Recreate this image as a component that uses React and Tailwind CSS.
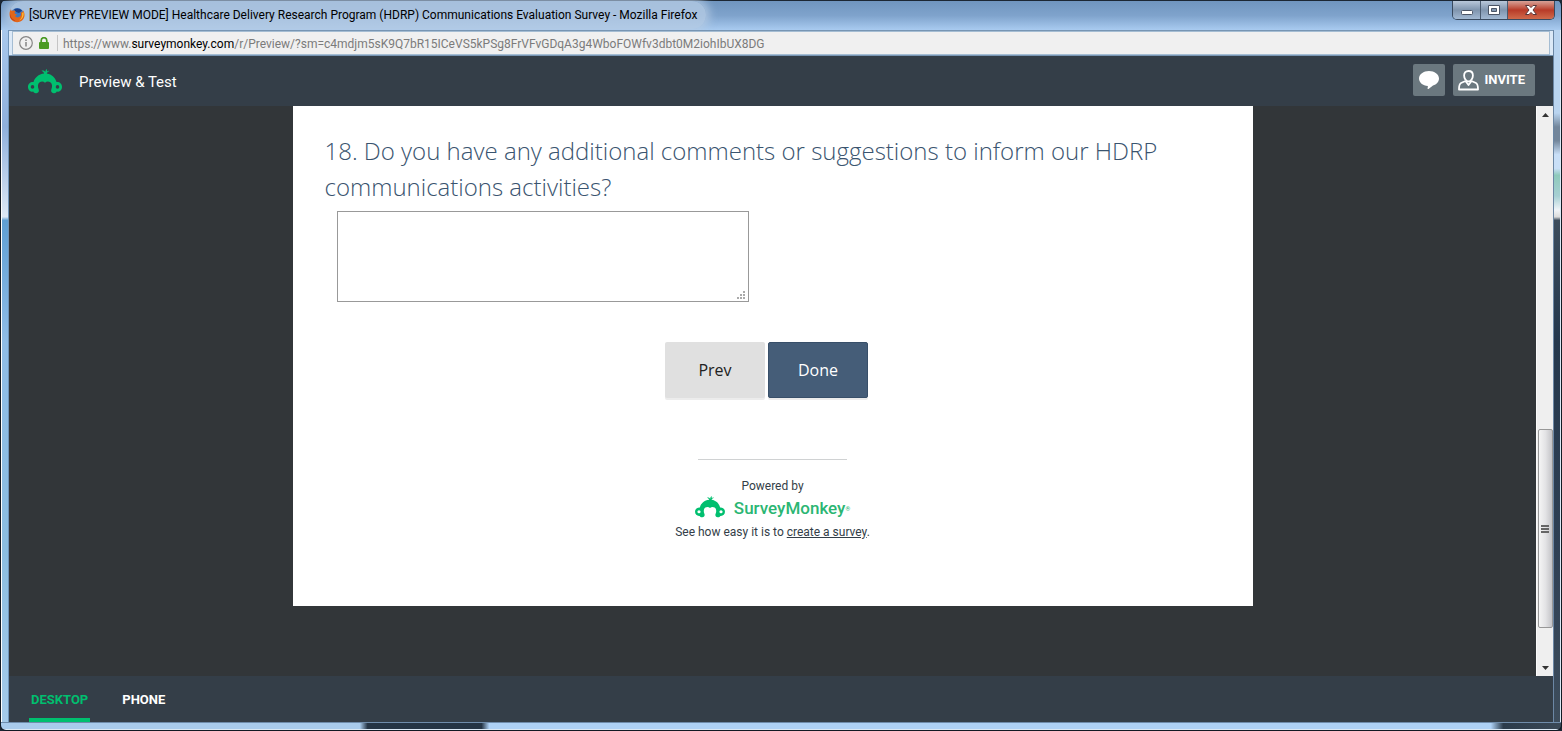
import React, { useState } from 'react';

const MonkeyMark = ({ className }) => (
  <svg viewBox="0 0 34 25" className={className} fill="none" aria-hidden="true">
    <path
      fill="#00bf6f"
      d="M16.2 4.4C15.6 3 14.600 2.200 13.500 1.700C15.200 1.400 16.500 1.900 17.300 3C17.400 1.700 17.900 .6 19 0C18.900 1 18.900 1.800 19.100 2.400C19.800 1.800 20.600 1.600 21.400 1.900C20.200 2.400 19.200 3.200 18.700 4.400C24 5.200 27.400 8.600 28.500 13.100C31.700 12.800 34 15 34 17.900C34 20.900 31.500 23 28.800 22.600C28.200 23.800 27 24.500 25.600 24.200C23.600 23.900 22.600 22.200 23.300 20.400C24.600 17.400 24.300 14.600 22.300 13.200C20.500 12 18.500 12.200 17 13.700C15.500 12.200 13.500 12 11.700 13.200C9.700 14.600 9.400 17.400 10.700 20.400C11.400 22.200 10.400 23.900 8.400 24.200C7 24.500 5.800 23.800 5.200 22.600C2.500 23 0 20.900 0 17.900C0 15 2.300 12.800 5.500 13.100C6.600 8.600 10.500 5 16.200 4.400Z"
    />
    <circle cx="4.500" cy="17.900" r="1.800" className="fill-current" />
    <circle cx="29.500" cy="17.900" r="1.800" className="fill-current" />
  </svg>
);

const FirefoxIcon = () => (
  <svg viewBox="0 0 16 16" className="size-4" aria-hidden="true">
    <circle cx="8.300" cy="7.600" r="6.500" fill="#3b78c3" />
    <path d="M5 2.500C7 .8 11 1 13 3.500L10 6L7 5Z" fill="#1c3f86" />
    <path
      d="M2 2C2 3 2.300 3.500 3 3.900C4.500 3.300 6 3.700 6.800 4.600C5.600 5 5.300 6 6 6.800L7.800 7.300C7.500 8.500 6.500 8.600 6 9C7 10.800 9.800 10.800 11.200 9.300C12.300 8 12.200 6.400 11.400 5C13.600 6 14.200 4.500 13.600 3C16 5.500 16.200 9.500 14 12.400C11.500 15.600 6.500 16 3.300 13.600C.4 11.300 0 7 1 4Z"
      fill="#e2661a"
    />
    <path d="M14.300 5C15.500 8.500 13.500 12.500 10 13.600C12.600 11.500 13.500 9 13.200 6Z" fill="#fbc034" />
    <path d="M1 6C1 9.500 3 12.500 6.500 13.600C4 14 1.500 11.500 1 9Z" fill="#b5311a" />
  </svg>
);

const TitleBar = () => (
  <div className="flex h-[30px] shrink-0 items-start justify-between border-t border-[#1c2734] bg-gradient-to-b from-[#7095bf] via-[#7fa3cc] to-[#a9cbf0] pr-1.5 pl-2">
    <div className="flex h-7 items-center gap-1 rounded-full bg-[#b4cbe4]/80 pr-2 shadow-[0_0_8px_4px_rgba(180,203,228,0.8)]">
      <FirefoxIcon />
      <h1 className="font-[Roboto,sans-serif] text-xs whitespace-nowrap text-black">
        [SURVEY PREVIEW MODE] Healthcare Delivery Research Program (HDRP) Communications Evaluation Survey - Mozilla Firefox
      </h1>
    </div>
    <div className="flex h-[19px] overflow-hidden rounded-b-[5px] border border-t-0 border-[#394a5f]">
      <button aria-label="Minimize" className="flex w-7 items-center justify-center border-r border-[#4a5b70] bg-gradient-to-b from-[#b9c8da] via-[#8095ae] via-50% to-[#a2b9d3]">
        <svg viewBox="0 0 12 5" className="mt-1 h-[5px] w-3">
          <rect x=".5" y=".5" width="11" height="4" rx="1" fill="#fff" stroke="#4b5566" />
        </svg>
      </button>
      <button aria-label="Maximize" className="flex w-[27px] items-center justify-center border-r border-[#4a5b70] bg-gradient-to-b from-[#b9c8da] via-[#8095ae] via-50% to-[#a2b9d3]">
        <svg viewBox="0 0 12 10" className="h-2.5 w-3">
          <path fillRule="evenodd" d="M.5.5h11v9H.5zM3.500 3.500h5v3h-5z" fill="#fff" stroke="#4b5566" />
        </svg>
      </button>
      <button aria-label="Close" className="flex w-[46px] items-center justify-center bg-gradient-to-b from-[#d6a097] via-[#b83a28] via-50% to-[#d06a4b]">
        <svg viewBox="0 0 12 10" className="h-2.5 w-3">
          <path d="M.5.5h3.500L6 2.600L8 .5h3.500L8 5l3.500 4.500H8L6 7.400L4 9.500H.5L4 5Z" fill="#fff" stroke="#5a3638" />
        </svg>
      </button>
    </div>
  </div>
);

const AddressBar = () => (
  <div className="shrink-0 border-t border-b border-[#7795b3] bg-[#dce9f7] px-[3px]">
    <div className="flex h-6 items-center border border-[#a5bdd3] bg-[#f0f0f0] pl-1.5">
      <svg viewBox="0 0 14 14" className="size-3.5" fill="none" stroke="#858585">
        <circle cx="7" cy="7" r="6.300" strokeWidth="1.200" />
        <path d="M7 6v4.500M7 3.500v1.500" strokeWidth="1.500" />
      </svg>
      <svg viewBox="0 0 10 12" className="ml-1.5 h-3 w-2.5">
        <rect y="5" width="10" height="7" rx="1" fill="#4b9a24" />
        <path d="M2.200 6V3.500a2.800 2.800 0 0 1 5.600 0V6" fill="none" stroke="#4b9a24" strokeWidth="1.700" />
      </svg>
      <span className="mr-[5px] ml-2 h-4 border-l border-[#c5c5c5]" />
      <p className="pt-0.5 font-[Roboto,sans-serif] text-xs whitespace-nowrap text-[#7b7b7b]">
        https://www.<span className="text-black">surveymonkey.com</span>
        /r/Preview/?sm=c4mdjm5sK9Q7bR15ICeVS5kPSg8FrVFvGDqA3g4WboFOWfv3dbt0M2iohIbUX8DG
      </p>
    </div>
  </div>
);

const PreviewHeader = () => (
  <header className="flex h-[50px] shrink-0 items-center bg-[#343e48] pr-[18px] pb-0.5 pl-[19px] font-[Roboto,sans-serif]">
    <MonkeyMark className="mt-0.5 h-[25px] w-[34px] text-[#343e48]" />
    <h2 className="mt-1 ml-[17px] text-[15px] text-white">Preview &amp; Test</h2>
    <div className="ml-auto flex gap-2">
      <button aria-label="Comments" className="flex size-8 items-center justify-center rounded-[2px] bg-[#6b787f]">
        <svg viewBox="0 0 20 18" className="h-[18px] w-5" fill="#fff">
          <path d="M10 0C15.500 0 20 3.200 20 7.500C20 10.800 17.600 13.500 14 14.500L9.500 18C8.800 18.400 8.500 18 8.600 17.400L8.900 15C3.800 14.700 0 11.500 0 7.500C0 3.200 4.500 0 10 0Z" />
        </svg>
      </button>
      <button className="flex h-8 items-center gap-1.5 rounded-[2px] bg-[#6b787f] pr-2.5 pl-[5px] text-[13px] font-bold text-white">
        <svg viewBox="0 0 21 21" className="size-[21px]" fill="none" stroke="#fff" strokeWidth="1.800" strokeLinejoin="round">
          <path d="M10.500 1C7.800 1 6.100 2.800 6.100 5.500C6.100 8.300 8 11.500 10.500 11.500S14.900 8.300 14.900 5.500C14.900 2.800 13.200 1 10.500 1Z" />
          <path d="M7.500 11L3 13C1.800 13.600 1 15.500 1 19.500H20C20 15.500 19.200 13.600 18 13L13.500 11M7.500 11L10.500 15L13.500 11" />
        </svg>
        INVITE
      </button>
    </div>
  </header>
);

const Scrollbar = () => (
  <div className="flex w-[17px] shrink-0 flex-col items-center border-l border-[#fafafa] bg-[#efefef] pt-[7px] pb-1.5">
    <svg viewBox="0 0 7 4" className="h-1 w-[7px]"><path d="M0 4L3.500 0L7 4Z" fill="#333" /></svg>
    <div className="flex-[312]" />
    <div className="flex w-[15px] flex-[197] flex-col items-center justify-center gap-px rounded-[2px] border border-[#979797] bg-gradient-to-r from-[#f5f5f5] via-[#e3e3e5] to-[#c4c4c8]">
      <span className="h-0.5 w-2 bg-[#666]" />
      <span className="h-0.5 w-2 bg-[#666]" />
      <span className="h-0.5 w-2 bg-[#666]" />
    </div>
    <div className="flex-[38]" />
    <svg viewBox="0 0 7 4" className="h-1 w-[7px]"><path d="M0 0L3.500 4L7 0Z" fill="#333" /></svg>
  </div>
);

const Survey = () => {
  const [comments, setComments] = useState('');

  return (
    <section className="mx-auto w-full max-w-[960px] bg-white px-8 pt-[27px] pb-[66px] font-['Open_Sans',sans-serif]">
      <label htmlFor="comments" className="block text-2xl leading-9 font-light text-[#3a546f]">
        18. Do you have any additional comments or suggestions to inform our HDRP communications activities?
      </label>
      <div className="relative mt-1.5 ml-3 w-fit">
        <textarea
          id="comments"
          value={comments}
          onChange={(e) => setComments(e.target.value)}
          className="block h-[91px] w-[412px] border border-[#999] bg-white p-2 text-base text-[#333] [&::-webkit-resizer]:bg-white"
        />
        {/* dotted resize grip */}
        <svg viewBox="0 0 8 8" className="pointer-events-none absolute right-1 bottom-[3px] size-2" fill="#aaa">
          <path d="M6 0h2v2H6zM3 3h2v2H3zM6 3h2v2H6zM0 6h2v2H0zM3 6h2v2H3zM6 6h2v2H6z" />
        </svg>
      </div>
      <div className="mt-10 flex justify-center gap-[3px] pr-3">
        <button className="h-14 w-[100px] rounded-[2px] bg-[#e0e0e0] text-base text-[#222] shadow-[0_2px_0_#ececec]">Prev</button>
        <button className="h-14 w-[100px] rounded-[2px] border border-[#384f69] bg-[#455d78] text-base text-white shadow-[0_2px_0_#ececec]">Done</button>
      </div>
      <footer className="mt-[61px] flex flex-col items-center font-[Roboto,sans-serif] text-xs text-[#333e48]">
        <hr className="w-[149px] border-[#d0d2d3]" />
        <p className="mt-[18px]">Powered by</p>
        <a href="#surveymonkey" className="mt-0.5 flex h-6 items-start gap-[9px] text-[17px] leading-6 font-medium text-[#2bb673]">
          <MonkeyMark className="h-[22px] w-[30px] text-white" />
          <span>SurveyMonkey<sup className="text-[6px]">®</sup></span>
        </a>
        <p className="mt-1">
          See how easy it is to <a href="#create" className="underline">create a survey</a>.
        </p>
      </footer>
    </section>
  );
};

const DeviceTabs = () => {
  const [device, setDevice] = useState('desktop');
  const tabs = [
    { id: 'desktop', label: 'DESKTOP' },
    { id: 'phone', label: 'PHONE' },
  ];

  return (
    <nav className="flex h-[46px] shrink-0 gap-[30px] bg-[#343e48] pl-5 font-[Roboto,sans-serif]">
      {tabs.map((tab) => (
        <button
          key={tab.id}
          onClick={() => setDevice(tab.id)}
          className={`border-b-4 px-0.5 pt-1.5 text-[13px] font-bold ${
            device === tab.id ? 'border-[#00bf6f] text-[#00bf6f]' : 'border-transparent text-white'
          }`}
        >
          {tab.label}
        </button>
      ))}
    </nav>
  );
};

const App = () => (
  <div className="flex h-screen flex-col overflow-hidden bg-[#1c2734]">
    <div className="flex min-h-0 flex-1 flex-col overflow-hidden rounded-[6px] border-x border-b border-[#121a24]">
      <TitleBar />
      <div className="flex min-h-0 flex-1">
        <div className="w-2 shrink-0 border-r border-l border-r-[#6f93b8] border-l-white bg-[linear-gradient(to_bottom,#a9c8ec_0%,#8fb0dc_14%,#dde8f5_27%,#5f9fd4_27.5%,#8fbce6_45%,#8bbde0_75%,#a5cae9_100%)]" />
        <div className="flex min-w-0 flex-1 flex-col">
          <AddressBar />
          <PreviewHeader />
          <div className="flex min-h-0 flex-1 bg-[#323639]">
            <main className="min-w-0 flex-1 overflow-hidden">
              <Survey />
            </main>
            <Scrollbar />
          </div>
          <DeviceTabs />
        </div>
        <div className="w-2 shrink-0 border-r border-l border-r-[#dce9f5] border-l-[#6c87a5] bg-[linear-gradient(to_bottom,#b9d4f0_0%,#b9d4f0_12%,#73869b_14%,#73869b_16%,#c9dff7_18%,#c9dff7_20%,#8fcabb_21%,#a6cfd3_24%,#f0f4f8_26%,#dcdcdc_27%,#3c4c5c_27.5%,#25384d_45%,#2f4054_75%,#3e4d5c_100%)]" />
      </div>
      <div className="h-2 shrink-0 border-t border-b border-t-[#6f8cab] border-b-[#dce9f5] bg-[linear-gradient(to_right,#a9cbec_0%,#a9cbec_23%,#253444_23.5%,#253444_30.8%,#aed1f5_31.3%,#aed1f5_95.5%,#2b3b4b_96.3%,#3a4856_100%)]" />
    </div>
  </div>
);

export default App;
